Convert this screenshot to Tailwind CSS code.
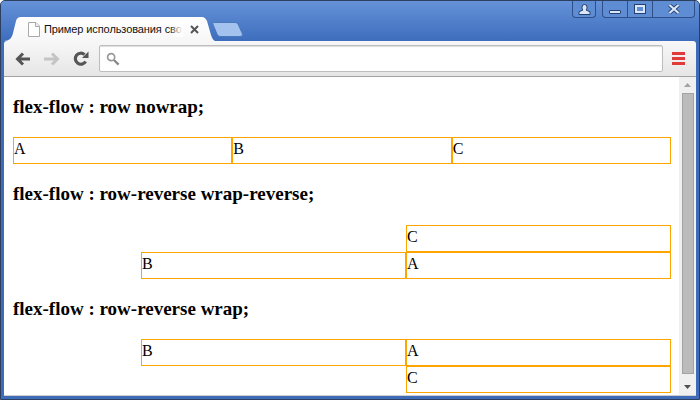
<!DOCTYPE html>
<html lang="ru">
<head>
    <meta charset="UTF-8">
    <title>Пример использования свойства flex-flow</title>
    <script src="https://cdn.jsdelivr.net/npm/@tailwindcss/browser@4"></script>
</head>
<body class="overflow-hidden">
    <!-- Window frame -->
    <div class="w-[700px] h-[400px] flex flex-col border border-[#2c3f5e] rounded-t-[5px] overflow-hidden bg-[#3f6cb8] font-['Liberation_Sans',sans-serif]">

        <!-- Title strip: tabs + caption buttons -->
        <div class="h-[40px] shrink-0 flex justify-between bg-gradient-to-b from-[#6592d8] to-[#3e6dbd]">
            <div class="flex items-end pl-[3px]">
                <div class="relative w-[208px] h-[24px]">
                    <svg class="absolute inset-0" width="212" height="24" viewBox="0 0 212 24">
                        <defs>
                            <linearGradient id="tabfill" x1="0" y1="0" x2="0" y2="1">
                                <stop offset="0" stop-color="#ffffff"/>
                                <stop offset="1" stop-color="#f7f7f7"/>
                            </linearGradient>
                        </defs>
                        <path d="M0 24 C5 24 8 21 9 16 L12 4 Q13 0 17 0 L198 0 Q201 0 203 4 L207 18 Q208.500 23 211 24 Z" fill="url(#tabfill)"/>
                    </svg>
                    <div class="relative flex items-center h-full pl-[24px]">
                        <svg class="w-[12px] h-[15px] shrink-0" viewBox="0 0 12 15">
                            <path d="M.5.5H8L11.5 4V14.5H.5Z" fill="#fff" stroke="#a9a9a9"/>
                            <path d="M7.5.5V4.5H11.5" fill="#eee" stroke="#a9a9a9"/>
                        </svg>
                        <div class="relative w-[139px] ml-[4px] whitespace-nowrap text-[11px] tracking-[-0.1px] text-[#111]">
                            Пример использования сво
                            <div class="absolute right-0 top-0 bottom-0 w-[14px] bg-gradient-to-r from-white/0 to-white"></div>
                        </div>
                        <svg class="w-[9px] h-[9px] ml-[7px] shrink-0" viewBox="0 0 9 9">
                            <path d="M1 1L8 8M8 1L1 8" stroke="#555" stroke-width="2"/>
                        </svg>
                    </div>
                </div>
                <svg class="mb-[4px]" width="32" height="15" viewBox="0 0 32 15">
                    <path d="M1.500.5H23Q25 .5 26 2L30.500 12Q31 14.500 28 14.500H8Q6 14.500 5 12L.8 2Q.5 .5 1.500 .5Z" fill="#a3c3ee" stroke="#4a78bd"/>
                </svg>
            </div>

            <div class="flex items-start pr-[4px]">
                <div class="w-[24px] h-[17px] flex items-center justify-center bg-[#5f8dd4] border border-t-0 border-[#2f4f88] rounded-b-[4px]">
                    <svg width="13" height="11" viewBox="0 0 13 11">
                        <path d="M4 3a2.500 2.500 0 0 1 5 0V4a2.500 2.500 0 0 1-1 2L12 7.800V10.500H1V7.800L5 6a2.500 2.500 0 0 1-1-2Z" fill="#dbe7f8" stroke="#24406f"/>
                    </svg>
                </div>
                <div class="ml-[6px] flex h-[17px] border border-t-0 border-[#2f4f88] rounded-b-[4px] bg-[#5f8dd4]">
                    <div class="w-[25px] flex items-center justify-center border-r border-[#2f4f88]">
                        <div class="w-[12px] h-[4px] mt-[5px] bg-[#dbe7f8] border border-[#24406f] rounded-[1px]"></div>
                    </div>
                    <div class="w-[25px] flex items-center justify-center border-r border-[#2f4f88]">
                        <div class="w-[10px] h-[8px] border-2 border-[#dbe7f8] outline outline-1 outline-[#24406f]"></div>
                    </div>
                    <div class="w-[41px] flex items-center justify-center">
                        <svg width="12" height="10" viewBox="0 0 12 10">
                            <path d="M1.500 1L10.500 9M10.500 1L1.500 9" stroke="#24406f" stroke-width="3.800"/>
                            <path d="M1.500 1L10.500 9M10.500 1L1.500 9" stroke="#dbe7f8" stroke-width="2.200"/>
                        </svg>
                    </div>
                </div>
            </div>
        </div>

        <!-- Client area -->
        <div class="flex-1 min-h-0 mx-[3px] mb-[3px] flex flex-col">
            <!-- Toolbar -->
            <div class="h-[36px] shrink-0 flex items-center pl-[11px] pr-[11px] rounded-t-[3px] bg-gradient-to-b from-[#f7f7f7] to-[#e6e6e6] border-b border-[#a3a3a3]">
                <svg class="shrink-0" width="15" height="14" viewBox="0 0 15 14">
                    <path d="M15 7H3M8 1.500L2.500 7L8 12.500" fill="none" stroke="#555" stroke-width="3"/>
                </svg>
                <svg class="shrink-0 ml-[14px]" width="16" height="14" viewBox="0 0 16 14">
                    <path d="M0 7H13M8 1.500L13.500 7L8 12.500" fill="none" stroke="#c4c4c4" stroke-width="3"/>
                </svg>
                <svg class="shrink-0 ml-[13px]" width="16" height="16" viewBox="0 0 16 16">
                    <path d="M12.600 10.500A5.500 5.500 0 1 1 11.500 3.600" fill="none" stroke="#555" stroke-width="3.200"/>
                    <path d="M9 7H15.500V.5Z" fill="#555"/>
                </svg>
                <div class="flex-1 h-[27px] ml-[10px] flex items-center pl-[6px] bg-white border border-[#bdbdbd] rounded-[2px] shadow-[inset_0_1px_1px_#ddd]">
                    <svg width="14" height="14" viewBox="0 0 15 15">
                        <circle cx="5.500" cy="5.500" r="3.800" fill="none" stroke="#999" stroke-width="1.800"/>
                        <path d="M8.500 8.500L13.500 13.500" stroke="#888" stroke-width="2.400"/>
                    </svg>
                </div>
                <div class="w-[13px] ml-[9px] flex flex-col gap-[2px]">
                    <div class="h-[3px] bg-[#e03a3a]"></div>
                    <div class="h-[3px] bg-[#e03a3a]"></div>
                    <div class="h-[3px] bg-[#e03a3a]"></div>
                </div>
            </div>

            <!-- Page + scrollbar -->
            <div class="flex-1 min-h-0 flex bg-white border-b border-[#cfcfcf]">
                <div class="flex-1 min-w-0 pl-[9px] pr-[8px] font-['Liberation_Serif',serif] text-black text-[16px] leading-[22px]">
                    <h3 class="mt-[19px] mb-[20px] text-[19px] leading-[21px] font-bold">flex-flow : row nowrap;</h3>
                    <div class="flex flex-row flex-nowrap">
                        <div class="flex-1 h-[27px] border border-[#ffa500]">A</div>
                        <div class="flex-1 h-[27px] border border-[#ffa500]">B</div>
                        <div class="flex-1 h-[27px] border border-[#ffa500]">C</div>
                    </div>
                    <h3 class="mt-[19px] mb-[21px] text-[19px] leading-[21px] font-bold">flex-flow : row-reverse wrap-reverse;</h3>
                    <div class="flex flex-row-reverse flex-wrap-reverse">
                        <div class="w-[265px] h-[27px] border border-[#ffa500]">A</div>
                        <div class="w-[265px] h-[27px] border border-[#ffa500]">B</div>
                        <div class="w-[265px] h-[27px] border border-[#ffa500]">C</div>
                    </div>
                    <h3 class="mt-[19px] mb-[20px] text-[19px] leading-[21px] font-bold">flex-flow : row-reverse wrap;</h3>
                    <div class="flex flex-row-reverse flex-wrap">
                        <div class="w-[265px] h-[27px] border border-[#ffa500]">A</div>
                        <div class="w-[265px] h-[27px] border border-[#ffa500]">B</div>
                        <div class="w-[265px] h-[27px] border border-[#ffa500]">C</div>
                    </div>
                </div>

                <!-- Scrollbar -->
                <div class="w-[17px] shrink-0 flex flex-col items-center pt-[6px] pb-[6px] bg-[#f0f0f0]">
                    <svg width="7" height="4" viewBox="0 0 7 4"><path d="M3.500 0L7 4H0Z" fill="#a3a3a3"/></svg>
                    <div class="w-[12px] h-[281px] mt-[6px] bg-[#bbbbbb] border border-[#a3a3a3]"></div>
                    <svg class="mt-auto" width="7" height="4" viewBox="0 0 7 4"><path d="M0 0H7L3.500 4Z" fill="#505050"/></svg>
                </div>
            </div>
        </div>
    </div>
</body>
</html>
